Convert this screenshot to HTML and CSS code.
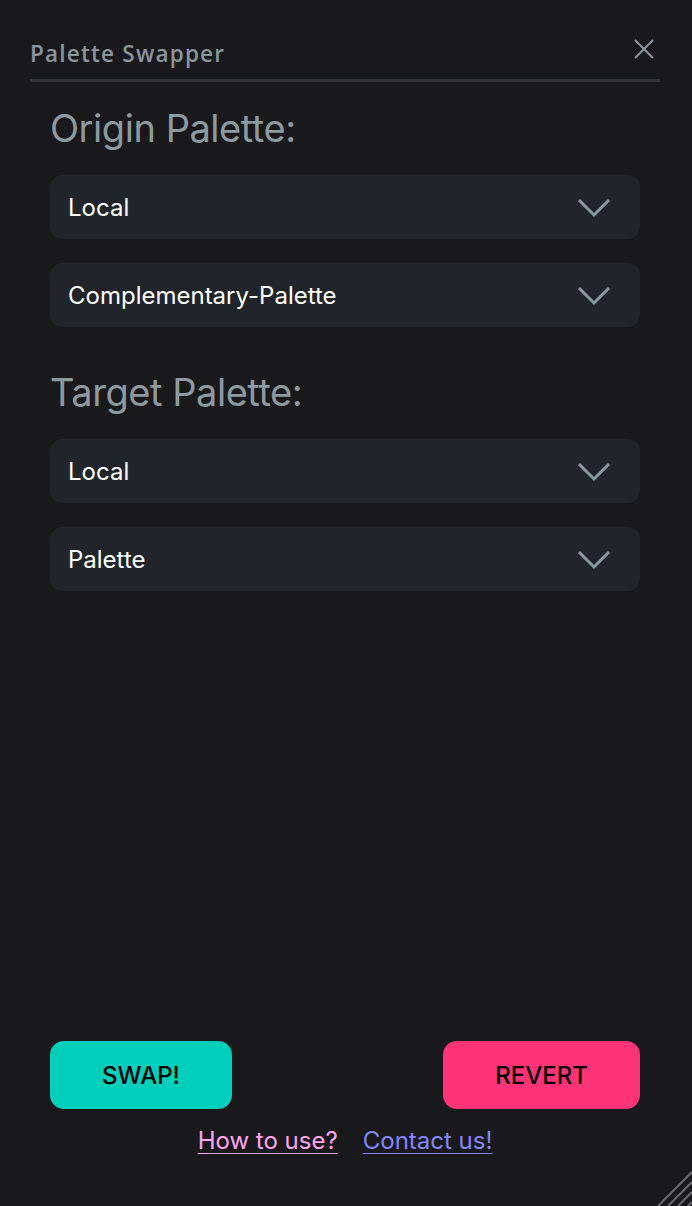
FILE: index.html
```html
<!DOCTYPE html>
<html lang="en">
<head>
<meta charset="utf-8">
<title>Palette Swapper</title>
<link rel="stylesheet" href="styles.css">
</head>
<body>
<div class="app">
  <header class="header">
    <h1 class="title">Palette Swapper</h1>
    <button class="close" aria-label="Close">
      <svg width="20" height="20" viewBox="0 0 20 20"><path d="M1 1 L19 19 M19 1 L1 19" stroke="#8a969c" stroke-width="2" fill="none"/></svg>
    </button>
  </header>
  <main class="content">
    <section class="group">
      <h2 class="label">Origin Palette:</h2>
      <div class="select"><span>Local</span><svg class="chev" width="34" height="20" viewBox="0 0 34 20"><path d="M2 2 L17 17 L32 2" stroke="#8a989f" stroke-width="3" fill="none"/></svg></div>
      <div class="select"><span>Complementary-Palette</span><svg class="chev" width="34" height="20" viewBox="0 0 34 20"><path d="M2 2 L17 17 L32 2" stroke="#8a989f" stroke-width="3" fill="none"/></svg></div>
    </section>
    <section class="group">
      <h2 class="label">Target Palette:</h2>
      <div class="select"><span>Local</span><svg class="chev" width="34" height="20" viewBox="0 0 34 20"><path d="M2 2 L17 17 L32 2" stroke="#8a989f" stroke-width="3" fill="none"/></svg></div>
      <div class="select"><span>Palette</span><svg class="chev" width="34" height="20" viewBox="0 0 34 20"><path d="M2 2 L17 17 L32 2" stroke="#8a989f" stroke-width="3" fill="none"/></svg></div>
    </section>
  </main>
  <footer class="footer">
    <div class="buttons">
      <button class="btn swap">SWAP!</button>
      <button class="btn revert">REVERT</button>
    </div>
    <div class="links">
      <a class="link how" href="#">How to use?</a>
      <a class="link contact" href="#">Contact us!</a>
    </div>
  </footer>
  <div class="grip">
    <svg width="36" height="36" viewBox="0 0 36 36"><path d="M2 36 L36 2 M12 36 L36 12 M22 36 L36 22 M32 36 L36 32" stroke="#6a6a6c" stroke-width="2" fill="none"/></svg>
  </div>
</div>
</body>
</html>
```
FILE: styles.css
```css
* { box-sizing: border-box; }
html, body { margin: 0; padding: 0; background: #19191b; }
body { font-family: Inter, "Noto Sans", sans-serif; }
.app {
  position: relative;
  width: 692px;
  height: 1206px;
  display: flex;
  flex-direction: column;
  padding: 0 32px 0 30px;
  overflow: hidden;
}
.header {
  display: flex;
  align-items: center;
  justify-content: space-between;
  height: 82px;
  padding-top: 26px;
  border-bottom: 3px solid #2f3437;
}
.title {
  margin: 0;
  font-family: "Open Sans", sans-serif;
  font-size: 22.5px;
  font-weight: 600;
  color: #8a959c;
  letter-spacing: 1.2px;
  margin-top: 2px;
}
.close {
  background: none;
  border: 0;
  padding: 0;
  margin-right: 6px;
  margin-top: -8px;
  width: 20px;
  height: 20px;
  display: flex;
}
.content {
  padding: 0 20px;
  flex: 1;
}
.group { display: flex; flex-direction: column; gap: 24px; }
.group + .group { margin-top: 42px; }
.label {
  margin: 0;
  font-size: 38px;
  font-weight: 400;
  color: #8d9aa0;
  letter-spacing: -0.45px;
  line-height: 46px;
  margin-top: 23px;
  margin-bottom: 0;
}
.group + .group .label { margin-top: 0; }
.select {
  height: 64px;
  border-radius: 12px;
  background: #212428;
  display: flex;
  align-items: center;
  justify-content: space-between;
  padding: 0 29px 0 18px;
  color: #ffffff;
  font-size: 24px;
}
.chev { display: block; margin-top: 2px; }
.footer {
  padding: 0 20px 51px;
  display: flex;
  flex-direction: column;
  gap: 18px;
}
.buttons { display: flex; justify-content: space-between; }
.btn {
  height: 68px;
  border: 0;
  border-radius: 14px;
  font-family: Inter, sans-serif;
  font-size: 24px;
  font-weight: 500;
  color: #000;
}
.swap { width: 182px; background: #00cfbb; }
.revert { width: 197px; background: #ff3377; }
.links { display: flex; justify-content: center; gap: 25px; }
.link {
  font-size: 24px;
  line-height: 28px;
  text-decoration: underline;
  text-underline-offset: 4px;
  text-decoration-thickness: 1px;
}
.how { color: #ffa6f2; }
.contact { color: #8686ff; }
.grip {
  position: absolute;
  right: 0;
  bottom: 0;
  width: 36px;
  height: 36px;
}
.grip svg { display: block; }
```
